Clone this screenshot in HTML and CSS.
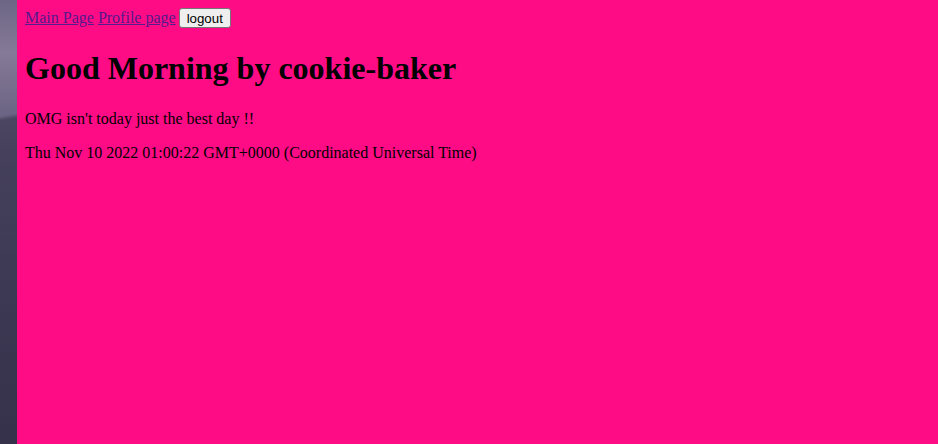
FILE: index.html
```html
<!DOCTYPE html>
<html>
<head>
<meta charset="utf-8">
<link rel="stylesheet" href="styles.css">
</head>
<body>
<div class="desktop"></div>
<main class="page">
  <nav class="nav"><a href="#">Main Page</a> <a href="#">Profile page</a> <button class="logout">logout</button></nav>
  <h1 class="title">Good Morning by cookie-baker</h1>
  <p class="text">OMG isn't today just the best day !!</p>
  <p class="text">Thu Nov 10 2022 01:00:22 GMT+0000 (Coordinated Universal Time)</p>
</main>
</body>
</html>
```

FILE: styles.css
```css
html, body {
  margin: 0;
  height: 100%;
}
body {
  display: flex;
  font-family: "Liberation Serif", "Times New Roman", serif;
  font-size: 16px;
  color: #000;
}
.desktop {
  width: 17px;
  flex: none;
  background:
    linear-gradient(170deg, transparent 0 26%, rgba(50,45,70,0.55) 27% 100%),
    linear-gradient(180deg, #6c6684 0%, #857a97 12%, #5c5677 35%, #4a4663 65%, #3b3851 100%);
}
.page {
  flex: 1;
  background: #fe0b86;
  padding: 8px;
}
.nav {
  line-height: 20px;
}
.nav a {
  color: #551a8b;
  text-decoration: underline;
}
.logout {
  font-family: "Liberation Sans", Arial, sans-serif;
  font-size: 13.3px;
  color: #000;
  background: #efefef;
  border: 1px solid #767676;
  border-radius: 3px;
  padding: 0 7px;
  height: 20px;
  vertical-align: top;
  margin: 0 0 0 -1px;
}
.title {
  font-size: 32px;
  font-weight: bold;
  margin: 22px 0 23px;
}
.text {
  margin: 16px 0;
}
```
